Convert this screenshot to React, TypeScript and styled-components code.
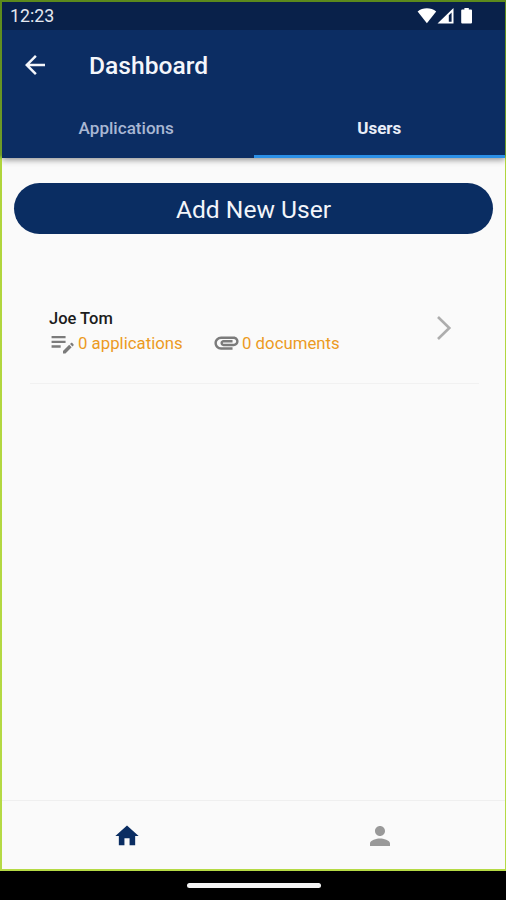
import React from "react";
import styled, { createGlobalStyle } from "styled-components";

const Global = createGlobalStyle`
  * { box-sizing: border-box; }
  html, body { margin: 0; background: #000; }
  body { font-family: Roboto, "Open Sans", sans-serif; overflow: hidden; }
  button { font: inherit; border: 0; padding: 0; background: none; color: inherit; }
`;

const Device = styled.div`
  width: 506px;
  height: 900px;
  display: flex;
  flex-direction: column;
  background: #000;
`;

const Frame = styled.div`
  height: 871px;
  flex: none;
  display: flex;
  padding: 2px 1px 2px 2px;
  background: linear-gradient(#5c8a1c 0, #6f9c28 155px, #b0d53c 160px, #b5da45 100%);
`;

const Screen = styled.div`
  flex: 1;
  min-width: 0;
  display: flex;
  flex-direction: column;
  background: #fafafa;
`;

const Header = styled.header`
  height: 156px;
  flex: none;
  display: flex;
  flex-direction: column;
  background: #0c2d63;
  box-shadow: 0 2px 6px rgba(0, 0, 0, 0.42);
  clip-path: inset(0 0 -14px 0);
`;

const StatusBar = styled.div`
  height: 28px;
  flex: none;
  padding: 0 31px 0 8px;
  display: flex;
  align-items: center;
  justify-content: space-between;
  background: #09214a;
  color: #e4e8f0;
`;

const Clock = styled.span`
  font-size: 17.8px;
  line-height: 28px;
`;

const StatusIcons = styled.svg`
  width: 57px;
  height: 20px;
  display: block;
`;

const TitleBar = styled.div`
  height: 70px;
  flex: none;
  display: flex;
  align-items: center;
  padding-left: 18px;
  color: #f4f6fb;
`;

const Title = styled.h1`
  margin: 1px 0 0 39px;
  font-size: 24.6px;
  line-height: 30px;
  font-weight: 500;
`;

const Tabs = styled.nav`
  flex: 1;
  display: grid;
  grid-template-columns: 1fr 1fr;
`;

const Tab = styled.button<{ $active?: boolean }>`
  padding: ${(p) => (p.$active ? "0" : "0 3px 0 0")};
  font-size: ${(p) => (p.$active ? "17px" : "17.1px")};
  font-weight: ${(p) => (p.$active ? 700 : 500)};
  color: ${(p) => (p.$active ? "#e9eef8" : "#a9b7d3")};
  border-bottom: 3px solid ${(p) => (p.$active ? "#2b8fe6" : "transparent")};
`;

const Content = styled.main`
  flex: 1;
  padding: 25px 12px 0;
`;

const AddButton = styled.button`
  width: 479px;
  height: 51px;
  display: block;
  border-radius: 26px;
  background: #0a2d62;
  color: #f3f5fa;
  font-size: 24.6px;
  line-height: 53px;
`;

const UserRow = styled.section`
  height: 98px;
  margin: 52px 14px 0 16px;
  padding: 23px 27px 0 19px;
  display: flex;
  justify-content: space-between;
  border-bottom: 1px solid #f1f1f1;
`;

const UserName = styled.h2`
  margin: 0;
  font-size: 16.5px;
  line-height: 20px;
  font-weight: 500;
  color: #1c1c1c;
`;

const Stats = styled.div`
  display: flex;
  margin-top: -1px;
`;

const Stat = styled.div<{ $width: number }>`
  width: ${(p) => p.$width}px;
  height: 29px;
  display: flex;
  align-items: center;
  gap: 1px;
  color: #ec9a1f;
  font-size: 16.8px;
  white-space: nowrap;
`;

const Icon = styled.svg<{ $size: number; $color: string }>`
  width: ${(p) => p.$size}px;
  height: ${(p) => p.$size}px;
  flex: none;
  display: block;
  fill: ${(p) => p.$color};
`;

const Chevron = styled.svg`
  width: 16px;
  height: 26px;
  margin-top: 6px;
  fill: none;
  stroke: #adadad;
  stroke-width: 2.6;
`;

const BottomNav = styled.nav`
  height: 69px;
  flex: none;
  display: flex;
  align-items: center;
  gap: 224px;
  padding: 1px 0 0 111px;
  border-top: 1px solid #efefef;
`;

const GestureArea = styled.div`
  flex: 1;
  padding-left: 1px;
  display: flex;
  justify-content: center;
  align-items: center;
`;

const GestureBar = styled.div`
  width: 134px;
  height: 5px;
  border-radius: 3px;
  background: #f4f4f4;
`;

export default function App() {
  return (
    <>
      <Global />
      <Device>
        <Frame>
          <Screen>
            <Header>
              <StatusBar>
                <Clock>12:23</Clock>
                <StatusIcons viewBox="0 0 57 20" fill="#fff">
                  <path d="M0.6 5.6C5.8 1.2 14 1.2 19.2 5.6L9.9 17.2Z" />
                  <path fillRule="evenodd" d="M20.5 17.5 36.5 2V17.5ZM31.8 9.2V15.8H34.6V6.4Z" />
                  <path d="M47.4 2h4.4v1.5h2.2q1 0 1 1v12q0 1-1 1h-8.8q-1 0-1-1v-12q0-1 1-1h2.2Z" />
                </StatusIcons>
              </StatusBar>
              <TitleBar>
                <Icon $size={30} $color="#f4f6fb" viewBox="0 0 24 24">
                  <path d="M20 11H7.83l5.59-5.59L12 4l-8 8 8 8 1.41-1.41L7.83 13H20v-2z" />
                </Icon>
                <Title>Dashboard</Title>
              </TitleBar>
              <Tabs>
                <Tab>Applications</Tab>
                <Tab $active>Users</Tab>
              </Tabs>
            </Header>
            <Content>
              <AddButton>Add New User</AddButton>
              <UserRow>
                <div>
                  <UserName>Joe Tom</UserName>
                  <Stats>
                    <Stat $width={163}>
                      <Icon $size={28} $color="#7b7b7b" viewBox="0 0 24 24">
                        <path d="M2.2 10h12v2h-12v-2zm0-2h12V6h-12v2zm0 8h7.8v-2H2.2v2zm15.81-3.13.71-.71c.39-.39 1.02-.39 1.41 0l.71.71c.39.39.39 1.02 0 1.41l-.71.71-2.12-2.12zm-.71.71-5.3 5.3V21h2.12l5.3-5.3-2.12-2.12z" />
                      </Icon>
                      0 applications
                    </Stat>
                    <Stat $width={130}>
                      <Icon $size={29} $color="#7b7b7b" viewBox="0 0 24 24">
                        <path d="M2 12.5C2 9.46 4.46 7 7.5 7H18c2.21 0 4 1.79 4 4s-1.79 4-4 4H9.5C8.12 15 7 13.88 7 12.5S8.12 10 9.5 10H17v2H9.41c-.55 0-.55 1 0 1H18c1.1 0 2-.9 2-2s-.9-2-2-2H7.5C5.57 9 4 10.57 4 12.5S5.57 16 7.5 16H17v2H7.5C4.46 18 2 15.54 2 12.5z" />
                      </Icon>
                      0 documents
                    </Stat>
                  </Stats>
                </div>
                <Chevron viewBox="0 0 16 26">
                  <path d="M2 2 13.3 13 2 24" />
                </Chevron>
              </UserRow>
            </Content>
            <BottomNav>
              <Icon $size={28} $color="#0a2d62" viewBox="0 0 24 24">
                <path d="M9.8 20v-6h4.4v6H19v-8h3L12 3 2 12h3v8z" />
              </Icon>
              <Icon $size={30} $color="#999" viewBox="0 0 24 24">
                <path d="M12 12c2.21 0 4-1.79 4-4s-1.79-4-4-4-4 1.79-4 4 1.79 4 4 4zm0 2c-2.67 0-8 1.34-8 4v2h16v-2c0-2.66-5.33-4-8-4z" />
              </Icon>
            </BottomNav>
          </Screen>
        </Frame>
        <GestureArea>
          <GestureBar />
        </GestureArea>
      </Device>
    </>
  );
}
